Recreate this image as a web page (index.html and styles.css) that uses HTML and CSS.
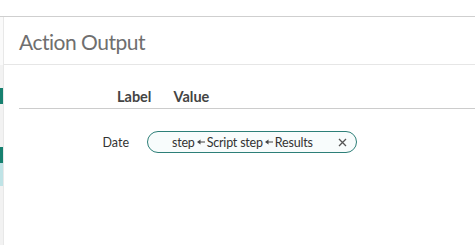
FILE: index.html
```html
<!DOCTYPE html>
<html>
<head>
<meta charset="utf-8">
<title>Action Output</title>
<link rel="stylesheet" href="styles.css">
</head>
<body>

<div class="frame">
  <!-- left navigation rail, only the edge is visible -->
  <aside class="rail">
    <div class="rail-top"></div>
    <div class="rail-gap rail-gap-first"></div>
    <div class="rail-item active"></div>
    <div class="rail-gap"></div>
    <div class="rail-item active"></div>
    <div class="rail-item hover"></div>
  </aside>

  <main class="panel">
    <header class="panel-head">
      <h2>Action Output</h2>
    </header>

    <div class="output-table">
      <div class="output-head">
        <span class="col-label">Label</span>
        <span class="col-value">Value</span>
      </div>

      <div class="output-row">
        <span class="row-label">Date</span>
        <span class="token">
          <span class="token-text">step<svg class="arrow" width="8" height="6" viewBox="0 0 8 6"><path d="M0 3 L3.5 0.5 L3.5 5.5 Z" fill="#444"/><path d="M3 3 H8" stroke="#444" stroke-width="1"/></svg>Script step<svg class="arrow" width="8" height="6" viewBox="0 0 8 6"><path d="M0 3 L3.5 0.5 L3.5 5.5 Z" fill="#444"/><path d="M3 3 H8" stroke="#444" stroke-width="1"/></svg>Results</span>
          <svg class="token-close" width="9" height="9" viewBox="0 0 9 9"><path d="M1 1 L8 8 M8 1 L1 8" stroke="#555" stroke-width="1.3"/></svg>
        </span>
      </div>
    </div>
  </main>
</div>

</body>
</html>
```

FILE: styles.css
```css
html {
  background: #fff;
}

body {
  margin: 0;
  padding-top: 16px;
  font-family: "Lato", "Open Sans", sans-serif;
  color: #333;
}

.frame {
  display: flex;
  border-top: 1px solid #cfcfcf;
  height: 228px;
}

/* Left rail */
.rail {
  width: 3px;
  border-right: 1px solid #e8e8e8;
  display: flex;
  flex-direction: column;
  background: #f2f2f2;
}
.rail-top {
  height: 48px;
  background: #fafafa;
}
.rail-gap {
  height: 43px;
}
.rail-gap-first {
  height: 23px;
}
.rail-item {
  height: 16px;
}
.rail-item.active {
  background: #16806f;
}
.rail-item.hover {
  height: 23px;
  background: #bfe3e6;
}

/* Panel */
.panel {
  flex: 1;
  display: flex;
  flex-direction: column;
}

.panel-head {
  height: 47px;
  border-bottom: 1px solid #e6e6e6;
  display: flex;
  align-items: center;
  padding-left: 15px;
}
.panel-head h2 {
  margin: 0;
  font-size: 21px;
  letter-spacing: -0.5px;
  font-weight: 400;
  color: #6f6f6f;
  padding-top: 2px;
}

.output-table {
  margin-left: 15px;
}

.output-head {
  height: 44px;
  border-bottom: 1px solid #cccccc;
  display: flex;
  align-items: flex-end;
  padding-bottom: 3px;
  box-sizing: border-box;
  font-size: 14.5px;
  font-weight: 700;
  color: #444;
}
.col-label {
  margin-left: 98px;
}
.col-value {
  margin-left: 22px;
}

.output-row {
  display: flex;
  align-items: center;
  padding-top: 22px;
}
.row-label {
  width: 110px;
  text-align: right;
  font-size: 12.5px;
  color: #333;
}

.token {
  margin-left: 18px;
  width: 210px;
  height: 22px;
  box-sizing: border-box;
  border: 1.5px solid #2d7f78;
  border-radius: 11px;
  background: #f8fcfc;
  display: flex;
  align-items: center;
  padding: 0 9px 0 24px;
  font-size: 12.5px;
  letter-spacing: -0.2px;
}
.token-text {
  flex: 1;
  white-space: nowrap;
}
.arrow {
  margin: 0 2px;
  vertical-align: 2px;
}
.token-close {
  display: block;
}
```
